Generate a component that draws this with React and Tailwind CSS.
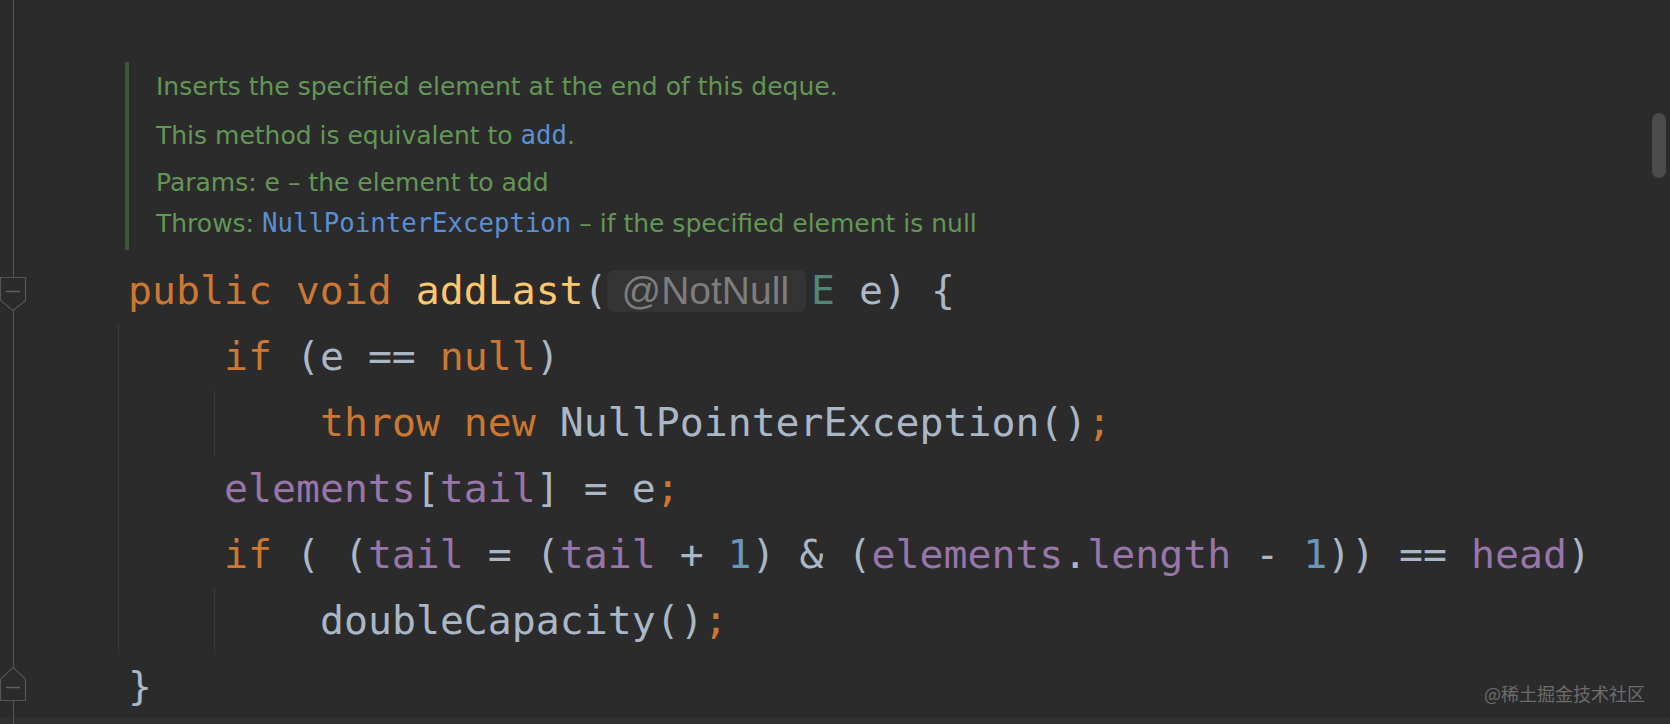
import React from 'react';

const mono = { fontFamily: '"DejaVu Sans Mono", "Liberation Mono", monospace' };

const C = {
  kw: 'text-[#cc7832]',
  fn: 'text-[#ffc66d]',
  pl: 'text-[#a9b7c6]',
  fd: 'text-[#9876aa]',
  nm: 'text-[#6897bb]',
  tp: 'text-[#52857a]',
};

const lines = [
  {
    level: 0,
    parts: [['kw', 'public void '], ['fn', 'addLast'], ['pl', '('], ['inlay', '@NotNull'], ['tp', 'E'], ['pl', ' e) {']],
  },
  { level: 1, parts: [['kw', 'if'], ['pl', ' (e == '], ['kw', 'null'], ['pl', ')']] },
  { level: 2, parts: [['kw', 'throw new '], ['pl', 'NullPointerException()'], ['kw', ';']] },
  { level: 1, parts: [['fd', 'elements'], ['pl', '['], ['fd', 'tail'], ['pl', '] = e'], ['kw', ';']] },
  {
    level: 1,
    parts: [
      ['kw', 'if'], ['pl', ' ( ('], ['fd', 'tail'], ['pl', ' = ('], ['fd', 'tail'], ['pl', ' + '], ['nm', '1'],
      ['pl', ') & ('], ['fd', 'elements'], ['pl', '.'], ['fd', 'length'], ['pl', ' - '], ['nm', '1'],
      ['pl', ')) == '], ['fd', 'head'], ['pl', ')'],
    ],
  },
  { level: 2, parts: [['pl', 'doubleCapacity()'], ['kw', ';']] },
  { level: 0, parts: [['pl', '}']] },
];

function FoldStart() {
  return (
    <svg width="27" height="34" viewBox="0 0 27 34" className="block shrink-0">
      <path d="M0.5 0.5 H25.5 V23.5 L13 33.5 L0.5 23.5 Z" fill="#2b2b2b" stroke="#555555" strokeWidth="1.2" />
      <path d="M6 14.5 H20" stroke="#5f5f5f" strokeWidth="1.5" />
    </svg>
  );
}

function FoldEnd() {
  return (
    <svg width="27" height="34" viewBox="0 0 27 34" className="block shrink-0">
      <path d="M0.5 33.5 H25.5 V12 L13 0.5 L0.5 12 Z" fill="#2b2b2b" stroke="#555555" strokeWidth="1.2" />
      <path d="M6 20.5 H20" stroke="#5f5f5f" strokeWidth="1.5" />
    </svg>
  );
}

function Seg({ h }) {
  return <div className="w-px ml-[13px] bg-[#555555] shrink-0" style={{ height: h }} />;
}

function CodeLine({ level, parts }) {
  return (
    <div className="flex h-[66px] items-center">
      {Array.from({ length: level }).map((_, i) => (
        <div key={i} className="w-[96px] h-full shrink-0 border-l border-[#383838]" />
      ))}
      <div className="w-[10px] shrink-0" />
      <div className="flex items-center whitespace-pre text-[39.85px]" style={mono}>
        {parts.map(([k, t], i) =>
          k === 'inlay' ? (
            <span
              key={i}
              className="inline-flex items-center h-[42px] pl-[15px] pr-[17px] mr-[5px] -ml-px rounded-[7px] bg-[#343434] text-[#7d7d7d] text-[39px]"
              style={{ fontFamily: '"Liberation Sans", Arial, sans-serif' }}
            >
              {t}
            </span>
          ) : (
            <span key={i} className={C[k]}>{t}</span>
          )
        )}
      </div>
    </div>
  );
}

export default function App() {
  const docLink = 'text-[#5a8fd6] text-[25.7px]';
  return (
    <div className="relative w-[1670px] h-[724px] bg-[#2b2b2b] overflow-hidden flex flex-col">
      <div className="flex h-[717px] overflow-hidden">
        {/* gutter */}
        <div className="w-[27px] shrink-0 flex flex-col">
          <Seg h={277} />
          <FoldStart />
          <Seg h={356} />
          <FoldEnd />
          <Seg h={16} />
        </div>

        {/* editor */}
        <div className="flex-1 flex flex-col pt-[62px]">
          <div
            className="ml-[98px] border-l-4 border-[#3d5736] pl-[27px] pt-[5px] pb-[6px] text-[25px] leading-[40px] text-[#629755]"
            style={{ fontFamily: '"DejaVu Sans", "Noto Sans", sans-serif' }}
          >
            <p>Inserts the specified element at the end of this deque.</p>
            <p className="mt-[8px]">
              This method is equivalent to <span className={docLink} style={mono}>add</span>.
            </p>
            <p className="mt-[7px]">Params: e – the element to add</p>
            <p>
              Throws: <span className={docLink} style={mono}>NullPointerException</span> – if the specified element is null
            </p>
          </div>

          <div className="mt-[8px] pl-[91px]">
            {lines.map((l, i) => (
              <CodeLine key={i} {...l} />
            ))}
          </div>
        </div>

        {/* scrollbar */}
        <div className="w-[18px] shrink-0 pt-[113px]">
          <div className="w-[14px] h-[65px] rounded-full bg-[#4b4b4b]" />
        </div>
      </div>

      <div className="flex-1 bg-[#303030] flex">
        <div className="w-px ml-[13px] bg-[#555555]" />
      </div>

      <div
        className="absolute right-[25px] bottom-[21px] text-[18px] leading-[20px] text-[#6c6c6c]"
        style={{ fontFamily: '"Noto Sans CJK SC", "Noto Sans", sans-serif' }}
      >
        @稀土掘金技术社区
      </div>
    </div>
  );
}
